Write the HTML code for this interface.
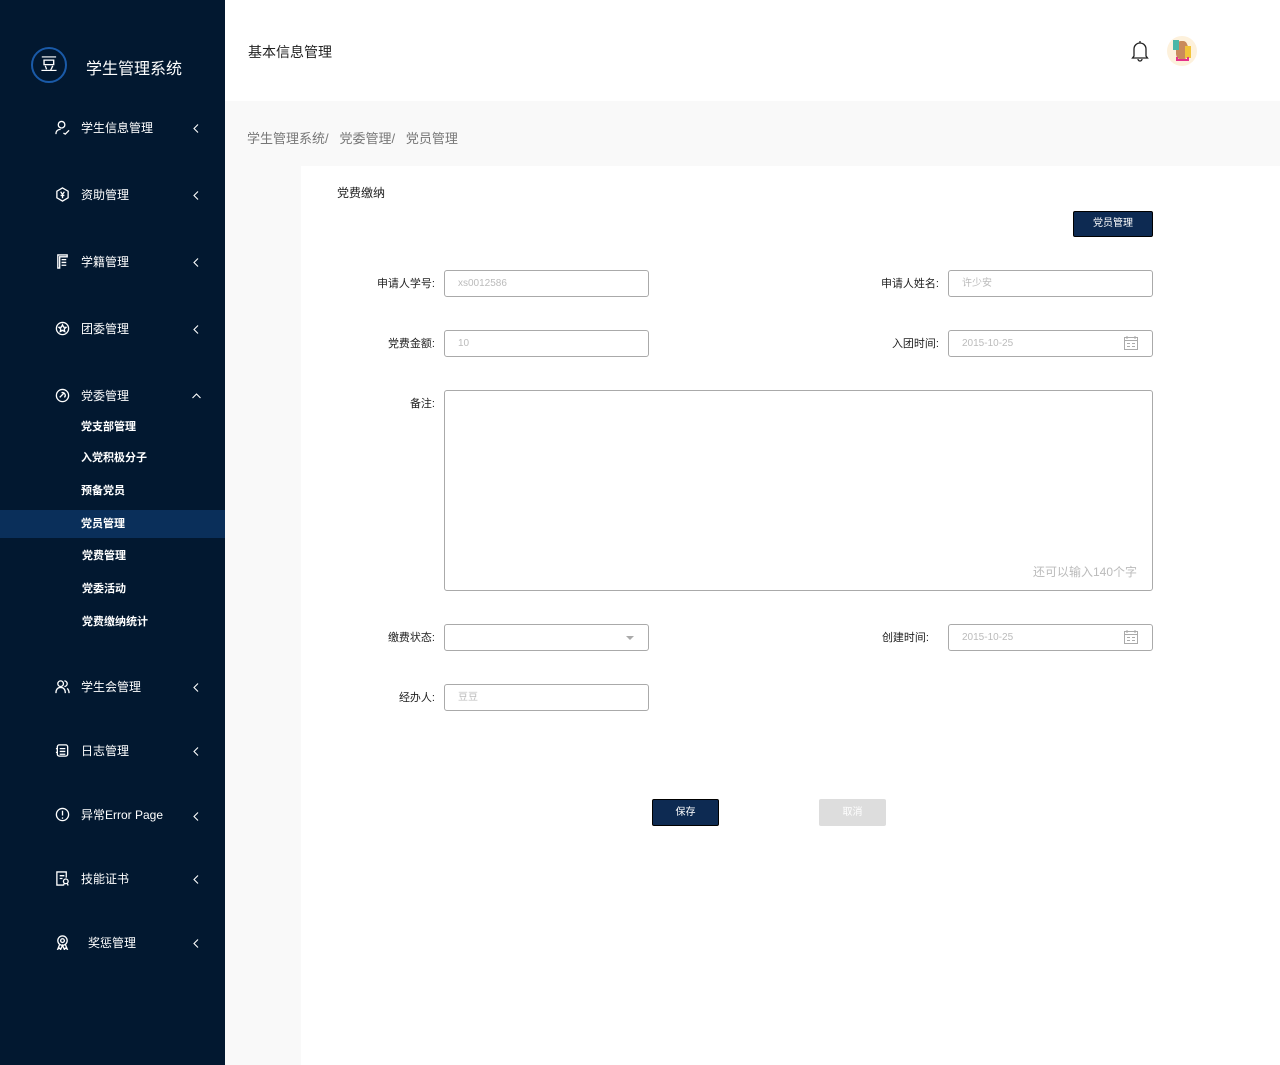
<!DOCTYPE html>
<html><head><meta charset="utf-8"><style>
*{margin:0;padding:0;box-sizing:border-box}
body{width:1280px;height:1065px;position:relative;background:#f9f9f9;font-family:"Liberation Sans","Noto Sans CJK SC",sans-serif;overflow:hidden}
.a{position:absolute}
#side{left:0;top:0;width:225px;height:1065px;background:#021830}
.mi{position:absolute;left:0;width:225px;color:#fff;font-size:12px;line-height:20px}
.mi .ic{position:absolute;left:55px;top:2px;width:15px;height:15px}
.mi .t{position:absolute;left:81px;top:0;white-space:nowrap}
.mi .ch{position:absolute;left:193px;top:6px;width:6px;height:9px}
.sub{position:absolute;left:81px;color:#fff;font-size:11px;font-weight:bold;line-height:16px}
.lab{position:absolute;font-size:11px;color:#222;text-align:right;line-height:14px}
.inp{position:absolute;border:1px solid #aaa;border-radius:3px;background:#fff;font-size:10px;color:#bbb;padding-left:13px;line-height:26px}
</style></head><body>
<div id="side" class="a">
 <div class="a" style="left:31px;top:47px;width:36px;height:36px;border:2px solid #1a5aa8;border-radius:50%;color:#fff;font-size:17px;text-align:center;line-height:32px">豆</div>
 <div class="a" style="left:86px;top:55px;color:#fff;font-size:16px">学生管理系统</div>

 <div class="mi" style="top:118px"><svg class="ic" viewBox="0 0 16 16" fill="none" stroke="#fff" stroke-width="1.4"><circle cx="7" cy="5" r="3.5"/><path d="M1 15c0-4 3-5 5-5M9 14l2 1 4-4"/></svg><span class="t">学生信息管理</span><svg class="ch" viewBox="0 0 6 9" fill="none" stroke="#fff" stroke-width="1.1"><path d="M5 0.5L1 4.5 5 8.5"/></svg></div>
 <div class="mi" style="top:185px"><svg class="ic" viewBox="0 0 16 16" fill="none" stroke="#fff" stroke-width="1.4"><path d="M8 1l6 3.5v7L8 15l-6-3.5v-7z"/><path d="M6 5l2 3 2-3M8 8v4M6 9h4"/></svg><span class="t">资助管理</span><svg class="ch" viewBox="0 0 6 9" fill="none" stroke="#fff" stroke-width="1.1"><path d="M5 0.5L1 4.5 5 8.5"/></svg></div>
 <div class="mi" style="top:252px"><svg class="ic" viewBox="0 0 16 16" fill="none" stroke="#fff" stroke-width="1.4"><path d="M3 1h10v2H5v12H3zM7 6h5M7 9h5M7 12h5"/></svg><span class="t">学籍管理</span><svg class="ch" viewBox="0 0 6 9" fill="none" stroke="#fff" stroke-width="1.1"><path d="M5 0.5L1 4.5 5 8.5"/></svg></div>
 <div class="mi" style="top:319px"><svg class="ic" viewBox="0 0 16 16" fill="none" stroke="#fff" stroke-width="1.4"><circle cx="8" cy="8" r="6.5"/><path d="M8 4l1.2 2.5 2.6.3-2 1.8.6 2.6L8 10l-2.4 1.2.6-2.6-2-1.8 2.6-.3z"/></svg><span class="t">团委管理</span><svg class="ch" viewBox="0 0 6 9" fill="none" stroke="#fff" stroke-width="1.1"><path d="M5 0.5L1 4.5 5 8.5"/></svg></div>
 <div class="mi" style="top:386px"><svg class="ic" viewBox="0 0 16 16" fill="none" stroke="#fff" stroke-width="1.4"><circle cx="8" cy="8" r="6.5"/><path d="M5 10l5-5M7 5a3 3 0 0 1 3 5"/></svg><span class="t">党委管理</span><svg class="ch" style="left:192px;width:9px;height:6px;top:7px" viewBox="0 0 9 6" fill="none" stroke="#fff" stroke-width="1.1"><path d="M0.5 5L4.5 1 8.5 5"/></svg></div>
 <div class="sub" style="top:419px">党支部管理</div>
 <div class="sub" style="top:450px">入党积极分子</div>
 <div class="sub" style="top:483px">预备党员</div>
 <div class="a" style="left:0;top:510px;width:225px;height:28px;background:#0a2f5a"></div>
 <div class="sub" style="top:516px">党员管理</div>
 <div class="sub" style="top:548px;left:82px">党费管理</div>
 <div class="sub" style="top:581px;left:82px">党委活动</div>
 <div class="sub" style="top:614px;left:82px">党费缴纳统计</div>

 <div class="mi" style="top:677px"><svg class="ic" viewBox="0 0 16 16" fill="none" stroke="#fff" stroke-width="1.4"><circle cx="6" cy="5" r="3"/><path d="M1 15c0-4 2-6 5-6s5 2 5 6M10 2a3 3 0 0 1 0 6M13 10c1 1 2 3 2 5"/></svg><span class="t">学生会管理</span><svg class="ch" viewBox="0 0 6 9" fill="none" stroke="#fff" stroke-width="1.1"><path d="M5 0.5L1 4.5 5 8.5"/></svg></div>
 <div class="mi" style="top:741px"><svg class="ic" viewBox="0 0 16 16" fill="none" stroke="#fff" stroke-width="1.4"><rect x="2.5" y="2" width="11" height="12" rx="2"/><path d="M5 6h6M5 9h6M5 12h6M1 6h2M1 10h2"/></svg><span class="t">日志管理</span><svg class="ch" viewBox="0 0 6 9" fill="none" stroke="#fff" stroke-width="1.1"><path d="M5 0.5L1 4.5 5 8.5"/></svg></div>
 <div class="mi" style="top:805px"><svg class="ic" viewBox="0 0 16 16" fill="none" stroke="#fff" stroke-width="1.4"><circle cx="8" cy="8" r="6.5"/><path d="M8 4v5M8 11v1.5"/></svg><span class="t">异常Error Page</span><svg class="ch" style="top:7px" viewBox="0 0 6 9" fill="none" stroke="#fff" stroke-width="1.1"><path d="M5 0.5L1 4.5 5 8.5"/></svg></div>
 <div class="mi" style="top:869px"><svg class="ic" viewBox="0 0 16 16" fill="none" stroke="#fff" stroke-width="1.4"><path d="M9 15H2V1h10v6M5 5h5M5 8h3"/><circle cx="11.5" cy="11" r="2.5"/><path d="M10 13l-1 2.5M13 13l1 2.5"/></svg><span class="t">技能证书</span><svg class="ch" viewBox="0 0 6 9" fill="none" stroke="#fff" stroke-width="1.1"><path d="M5 0.5L1 4.5 5 8.5"/></svg></div>
 <div class="mi" style="top:933px"><svg class="ic" viewBox="0 0 16 16" fill="none" stroke="#fff" stroke-width="1.4"><circle cx="8" cy="6" r="5"/><circle cx="8" cy="6" r="2"/><path d="M5 10l-2 5 2-1 1 1.5L8 11l2 4.5 1-1.5 2 1-2-5"/></svg><span class="t" style="left:88px">奖惩管理</span><svg class="ch" viewBox="0 0 6 9" fill="none" stroke="#fff" stroke-width="1.1"><path d="M5 0.5L1 4.5 5 8.5"/></svg></div>
</div>

<div class="a" style="left:225px;top:0;width:1055px;height:101px;background:#fff"></div>
<div class="a" style="left:248px;top:42px;font-size:14px;color:#222">基本信息管理</div>
<svg class="a" style="left:1130px;top:40px" width="20" height="22" viewBox="0 0 20 22" fill="none" stroke="#222" stroke-width="1.3"><path d="M4 16V9a6 6 0 0 1 12 0v7l1.5 2h-15zM10 1v2M8 19a2 2 0 0 0 4 0"/></svg>
<div class="a" style="left:1167px;top:36px;width:30px;height:30px;border-radius:50%;background:#fdf1dc;overflow:hidden">
 <div class="a" style="left:9px;top:5px;width:12px;height:18px;background:#c98a5c;border-radius:40% 40% 30% 30%"></div>
 <div class="a" style="left:6px;top:4px;width:6px;height:10px;background:#4ab7a8"></div>
 <div class="a" style="left:18px;top:10px;width:6px;height:12px;background:#f2c43a"></div>
 <div class="a" style="left:9px;top:21px;width:13px;height:4px;border:2px solid #e5318a;border-top:none"></div>
</div>

<div class="a" style="left:247px;top:128px;font-size:13px;color:#777">学生管理系统/&nbsp;&nbsp; 党委管理/&nbsp;&nbsp; 党员管理</div>

<div class="a" style="left:301px;top:166px;width:979px;height:899px;background:#fff"></div>
<div class="a" style="left:337px;top:184px;font-size:12px;color:#222">党费缴纳</div>
<div class="a" style="left:1073px;top:211px;width:80px;height:26px;background:#0d2a52;border:1px solid #000;border-radius:2px;color:#fff;font-size:10px;text-align:center;line-height:24px">党员管理</div>

<div class="lab" style="left:360px;top:277px;width:75px">申请人学号:</div>
<div class="inp" style="left:444px;top:270px;width:205px;height:27px">xs0012586</div>
<div class="lab" style="left:860px;top:277px;width:79px">申请人姓名:</div>
<div class="inp" style="left:948px;top:270px;width:205px;height:27px">许少安</div>

<div class="lab" style="left:360px;top:337px;width:75px">党费金额:</div>
<div class="inp" style="left:444px;top:330px;width:205px;height:27px">10</div>
<div class="lab" style="left:860px;top:337px;width:79px">入团时间:</div>
<div class="inp" style="left:948px;top:330px;width:205px;height:27px">2015-10-25
 <svg class="a" style="left:174px;top:4px" width="16" height="16" viewBox="0 0 16 16" fill="none" stroke="#aaa" stroke-width="1"><rect x="1.5" y="2.5" width="13" height="12"/><path d="M4 1v3M12 1v3M1.5 5.5h13M4 8.5h3M9 8.5h3M4 11.5h3M9 11.5h3"/></svg></div>

<div class="lab" style="left:360px;top:397px;width:75px">备注:</div>
<div class="a" style="left:444px;top:390px;width:709px;height:201px;border:1px solid #aaa;border-radius:3px"></div>
<div class="a" style="left:1033px;top:563px;font-size:12px;color:#bbb">还可以输入140个字</div>

<div class="lab" style="left:360px;top:631px;width:75px">缴费状态:</div>
<div class="inp" style="left:444px;top:624px;width:205px;height:27px"><div class="a" style="left:181px;top:11px;border:4px solid transparent;border-top:4px solid #aaa"></div></div>
<div class="lab" style="left:860px;top:631px;width:69px">创建时间:</div>
<div class="inp" style="left:948px;top:624px;width:205px;height:27px">2015-10-25
 <svg class="a" style="left:174px;top:4px" width="16" height="16" viewBox="0 0 16 16" fill="none" stroke="#aaa" stroke-width="1"><rect x="1.5" y="2.5" width="13" height="12"/><path d="M4 1v3M12 1v3M1.5 5.5h13M4 8.5h3M9 8.5h3M4 11.5h3M9 11.5h3"/></svg></div>

<div class="lab" style="left:360px;top:691px;width:75px">经办人:</div>
<div class="inp" style="left:444px;top:684px;width:205px;height:27px">豆豆</div>

<div class="a" style="left:652px;top:799px;width:67px;height:27px;background:#0d2a52;border:1px solid #000;border-radius:2px;color:#fff;font-size:10px;text-align:center;line-height:25px">保存</div>
<div class="a" style="left:819px;top:799px;width:67px;height:27px;background:#ddd;border-radius:2px;color:#fff;font-size:10px;text-align:center;line-height:27px">取消</div>
</body></html>
